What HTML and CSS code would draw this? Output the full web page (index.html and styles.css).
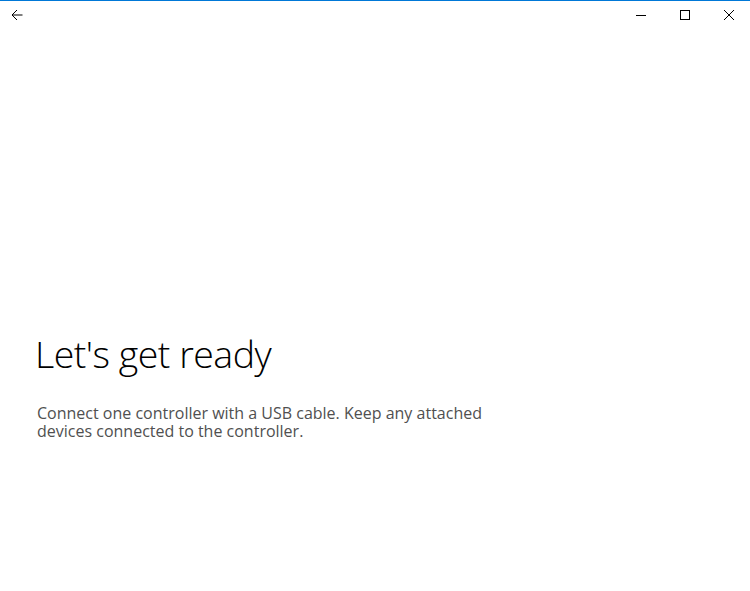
FILE: index.html
```html
<!DOCTYPE html>
<html lang="en">
<head>
<meta charset="utf-8">
<title>Let's get ready</title>
<link rel="stylesheet" href="styles.css">
</head>
<body>
<div class="window">
  <header class="titlebar">
    <button class="tb-btn back" aria-label="Back">
      <svg width="12" height="12" viewBox="0 0 12 12"><path d="M11.5 6H1M6 1 1 6l5 5" fill="none" stroke="#000" stroke-width="1"/></svg>
    </button>
    <div class="spacer"></div>
    <button class="tb-btn" aria-label="Minimize">
      <svg width="10" height="10" viewBox="0 0 10 10"><path d="M0 5.5h10" stroke="#000" stroke-width="1"/></svg>
    </button>
    <button class="tb-btn" aria-label="Maximize">
      <svg width="10" height="10" viewBox="0 0 10 10"><rect x="0.5" y="0.5" width="9" height="9" fill="none" stroke="#000" stroke-width="1"/></svg>
    </button>
    <button class="tb-btn" aria-label="Close">
      <svg width="10" height="10" viewBox="0 0 10 10"><path d="M0 0l10 10M10 0 0 10" stroke="#000" stroke-width="1"/></svg>
    </button>
  </header>
  <main class="content">
    <h1 class="title">Let's get ready</h1>
    <p class="desc">Connect one controller with a USB cable. Keep any attached devices connected to the controller.</p>
  </main>
</div>
</body>
</html>
```
FILE: styles.css
```css
html, body {
  margin: 0;
  padding: 0;
  background: #ffffff;
}
body {
  font-family: "Open Sans", "Noto Sans", "Liberation Sans", sans-serif;
}
.window {
  width: 750px;
  height: 591px;
  border-top: 1px solid #0078d7;
  box-sizing: border-box;
  display: flex;
  flex-direction: column;
}
.titlebar {
  height: 28px;
  display: flex;
  align-items: center;
}
.spacer { flex: 1; }
.tb-btn {
  width: 44px;
  height: 28px;
  border: 0;
  background: transparent;
  padding: 0;
  display: flex;
  align-items: center;
  justify-content: center;
}
.tb-btn.back {
  width: 34px;
}
.tb-btn:last-child {
  width: 43px;
}
.content {
  padding: 300px 0 0 35px;
}
.title {
  margin: 0;
  font-weight: 300;
  font-size: 37.5px;
  line-height: 50px;
  color: #000;
  letter-spacing: -0.5px;
}
.desc {
  margin: 25px 0 0 2px;
  width: 470px;
  font-size: 16px;
  line-height: 18px;
  color: #505050;
}
```
